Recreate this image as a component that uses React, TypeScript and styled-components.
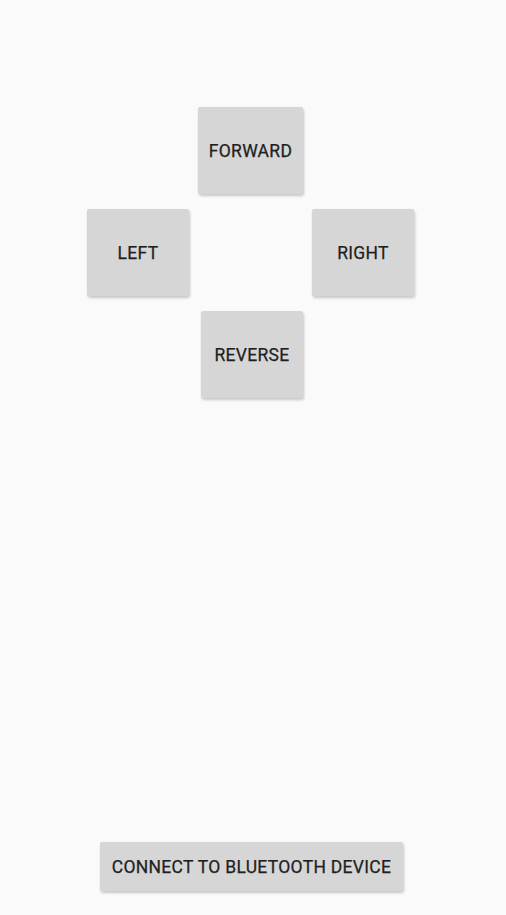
import React from "react";
import styled, { createGlobalStyle } from "styled-components";

const Global = createGlobalStyle`
  html, body { margin: 0; padding: 0; background: #fafafa; }
  body { font-family: Roboto, "Noto Sans", sans-serif; }
`;

const Screen = styled.div`
  width: 506px;
  height: 915px;
  background: #fafafa;
  display: flex;
  flex-direction: column;
  align-items: stretch;
  box-sizing: border-box;
  padding-top: 107px;
`;

const Pad = styled.div`
  display: flex;
  flex-direction: column;
`;

const Row = styled.div<{ $gapTop?: number; $pl?: number }>`
  display: flex;
  padding-left: ${(p) => p.$pl ?? 0}px;
  margin-top: ${(p) => p.$gapTop ?? 0}px;
`;

const Gap = styled.div<{ $w: number }>`
  width: ${(p) => p.$w}px;
  flex: none;
`;

const Btn = styled.button<{ $w: number; $h: number }>`
  width: ${(p) => p.$w}px;
  height: ${(p) => p.$h}px;
  flex: none;
  border: none;
  margin: 0;
  padding: 0;
  border-radius: 2px;
  background: #d6d6d6;
  color: #1f1f1f;
  font-family: Roboto, "Noto Sans", sans-serif;
  font-weight: 400;
  font-size: 17.5px;
  letter-spacing: 0.3px;
  text-transform: uppercase;
  -webkit-text-stroke: 0.25px #1f1f1f;
  box-shadow: 1px 2px 3px rgba(0, 0, 0, 0.2), 0 0 1px rgba(0, 0, 0, 0.08);
  display: flex;
  align-items: center;
  justify-content: center;
  cursor: pointer;
`;

const Spacer = styled.div`
  flex: 1;
`;

const Bottom = styled.div`
  display: flex;
  padding-left: 100px;
  padding-bottom: 24px;
`;

export default function App() {
  return (
    <>
      <Global />
      <Screen>
        <Pad>
          <Row $pl={198}>
            <Btn $w={105} $h={87}>Forward</Btn>
          </Row>
          <Row $pl={87} $gapTop={15}>
            <Btn $w={102} $h={87}>Left</Btn>
            <Gap $w={123} />
            <Btn $w={102} $h={87}>Right</Btn>
          </Row>
          <Row $pl={201} $gapTop={15}>
            <Btn $w={102} $h={87}>Reverse</Btn>
          </Row>
        </Pad>
        <Spacer />
        <Bottom>
          <Btn $w={303} $h={49}>Connect to Bluetooth device</Btn>
        </Bottom>
      </Screen>
    </>
  );
}
